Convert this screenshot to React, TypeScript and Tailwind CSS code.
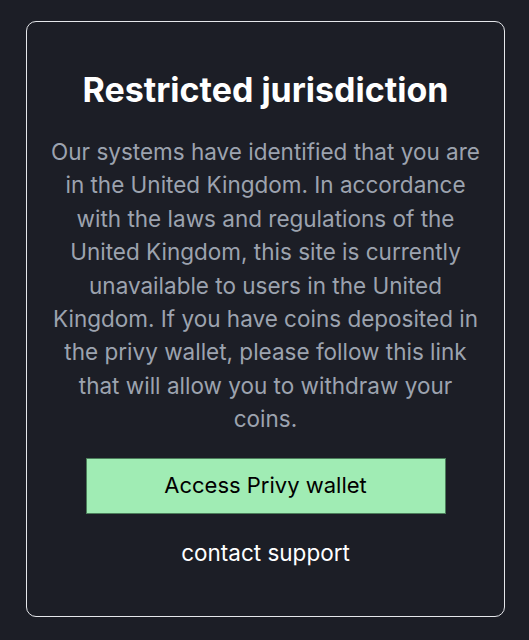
export default function App() {
  return (
    <div
      className="min-h-[640px] bg-[#1c1e26] pt-[21px] pl-[26px] pr-[24px] pb-[23px]"
      style={{ fontFamily: "Inter, 'Noto Sans', sans-serif" }}
    >
      <div className="h-[596px] rounded-[10px] border border-[#e5e7eb] px-6 pt-[48px] flex flex-col items-center text-center">
        <h1 className="text-[34px] leading-[40px] font-bold text-white">
          Restricted jurisdiction
        </h1>
        <p className="mt-[25px] text-[22.5px] leading-[33.4px] text-[#9ca3af]">
          Our systems have identified that you are in the United Kingdom. In
          accordance with the laws and regulations of the United Kingdom, this
          site is currently unavailable to users in the United Kingdom. If you
          have coins deposited in the privy wallet, please follow this link that
          will allow you to withdraw your coins.
        </p>
        <button className="mt-[22px] w-[360px] h-[56px] shrink-0 bg-[#a0ecb4] border border-[#4b7d5a] text-black text-[22px]">
          Access Privy wallet
        </button>
        <button className="mt-[24px] text-[22.5px] leading-[30px] text-white">
          contact support
        </button>
      </div>
    </div>
  );
}
